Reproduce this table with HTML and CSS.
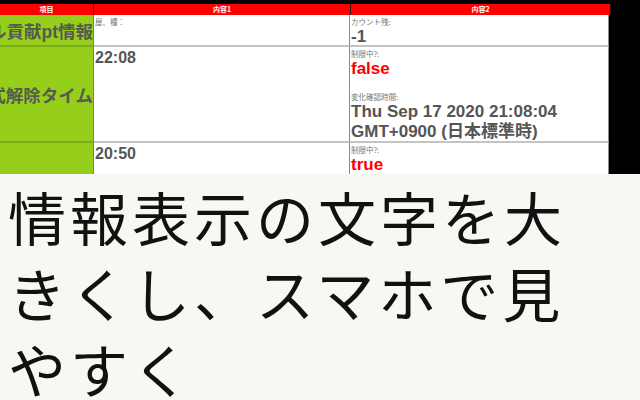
FILE: index.html
```html
<!DOCTYPE html>
<html lang="ja">
<head>
<meta charset="utf-8">
<link rel="stylesheet" href="styles.css">
</head>
<body>
<div class="shot">
  <div class="sheet">
    <div class="row head">
      <div class="c1">項目</div>
      <div class="c2">内容1</div>
      <div class="c3">内容2</div>
    </div>
    <div class="row r1">
      <div class="c1 name"><span>ル貢献pt情報</span></div>
      <div class="c2 cell">
        <div class="label">屋、種：</div>
      </div>
      <div class="c3 cell">
        <div class="label">カウント残:</div>
        <div class="val">-1</div>
      </div>
    </div>
    <div class="row r2">
      <div class="c1 name"><span>式解除タイム</span></div>
      <div class="c2 cell">
        <div class="val time">22:08</div>
      </div>
      <div class="c3 cell">
        <div class="label">制限中?:</div>
        <div class="val red gap">false</div>
        <div class="label">変化確認時間:</div>
        <div class="val">Thu Sep 17 2020 21:08:04</div>
        <div class="val">GMT+0900 (日本標準時)</div>
      </div>
    </div>
    <div class="row r3">
      <div class="c1 name"></div>
      <div class="c2 cell">
        <div class="val time">20:50</div>
      </div>
      <div class="c3 cell">
        <div class="label">制限中?:</div>
        <div class="val red">true</div>
      </div>
    </div>
  </div>
</div>
<div class="caption">情報表示の文字を大きくし、スマホで見やすく</div>
</body>
</html>
```
FILE: styles.css
```css
html, body {
  margin: 0;
  padding: 0;
}
body {
  width: 640px;
  height: 400px;
  overflow: hidden;
  background: #f8f8f2;
  font-family: "Liberation Sans", Arial, "Noto Sans CJK JP", sans-serif;
}
.shot {
  background: #000;
  height: 174px;
  padding-top: 4px;
  box-sizing: border-box;
  overflow: hidden;
}
.sheet {
  width: 611px;
}
.row {
  display: flex;
}
.c1 {
  width: 93px;
  border-right: 1px solid #6f8f2a;
  flex: none;
}
.c2 {
  width: 256px;
  border-right: 1px solid #8a8a8a;
  flex: none;
}
.c3 {
  width: 259px;
  border-right: 1px solid #8a8a8a;
  flex: none;
}
.head {
  height: 11px;
  background: #ff0000;
}
.head > div {
  color: #fff;
  font-family: "Noto Sans CJK JP", sans-serif;
  font-weight: bold;
  font-size: 7px;
  line-height: 11px;
  text-align: center;
  border-right-color: #3a1010;
}
.r1 { height: 32px; }
.r2 { height: 96px; }
.r3 { height: 40px; }
.r1 > div, .r2 > div {
  border-bottom: 2px solid #c4c4c4;
}
.name {
  background: #96cf1b;
  display: flex;
  align-items: center;
  justify-content: flex-end;
  overflow: hidden;
  white-space: nowrap;
}
.r1 > .name, .r2 > .name {
  border-bottom-color: #7cac17;
}
.name span {
  font-family: "Liberation Sans", "Noto Sans CJK JP", sans-serif;
  font-weight: bold;
  font-size: 17.5px;
  color: #575a50;
}
.cell {
  background: #fff;
  padding-left: 1px;
  box-sizing: border-box;
  overflow: hidden;
}
.label {
  font-family: "Noto Sans CJK JP", sans-serif;
  font-size: 7.5px;
  line-height: 11px;
  color: #777;
  padding-top: 1px;
}
.val {
  font-family: "Liberation Sans", "Noto Sans CJK JP", sans-serif;
  font-weight: bold;
  font-size: 17px;
  line-height: 20px;
  color: #555;
  white-space: nowrap;
}
.time {
  font-size: 16px;
  padding-top: 1px;
}
.red {
  color: #ff0000;
}
.gap {
  margin-bottom: 11px;
}
.caption {
  font-family: "Noto Sans CJK JP", sans-serif;
  font-size: 58px;
  letter-spacing: 4px;
  line-height: 76px;
  color: #111;
  padding: 4px 0 0 8px;
  width: 600px;
}
```
